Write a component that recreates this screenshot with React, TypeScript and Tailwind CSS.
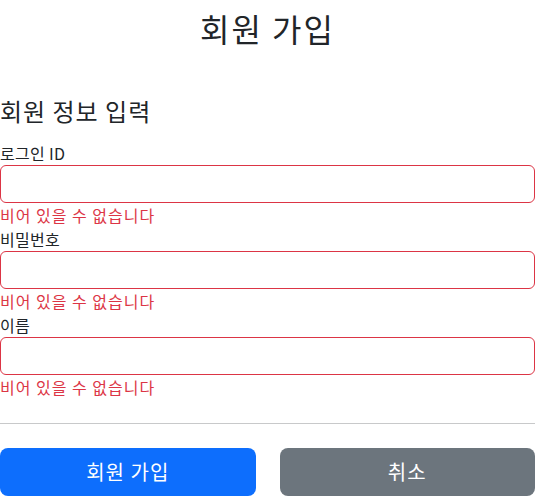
import React from "react";

const font = { fontFamily: '"Noto Sans CJK KR", "Noto Sans", sans-serif' };

function Field({ label }: { label: string }) {
  return (
    <div className="flex flex-col">
      <label className="text-[16px] leading-[24px] tracking-[0.3px] text-[#212529]">{label}</label>
      <input
        type="text"
        className="h-[38px] w-full rounded-[6px] border border-[#dc3545] bg-white px-3 outline-none"
      />
      <div className="text-[16px] leading-[24px] tracking-[1px] text-[#dc3545]">비어 있을 수 없습니다</div>
    </div>
  );
}

export default function App() {
  return (
    <div className="w-[535px] bg-white text-[#212529]" style={font}>
      <div className="pt-[9px] text-center text-[32px] leading-[38px] tracking-[2px] font-normal">회원 가입</div>
      <div className="mt-[49px] text-[24px] leading-[29px] tracking-[1px]">회원 정보 입력</div>
      <div className="mt-[16px] flex flex-col">
        <Field label="로그인 ID" />
        <Field label="비밀번호" />
        <Field label="이름" />
      </div>
      <hr className="my-[24px] border-0 border-t border-[#c8c9ca]" />
      <div className="grid grid-cols-2 gap-[24px]">
        <button className="h-[48px] rounded-[8px] bg-[#0d6efd] text-[20px] tracking-[1px] text-white">회원 가입</button>
        <button className="h-[48px] rounded-[8px] bg-[#6c757d] text-[20px] tracking-[1px] text-white">취소</button>
      </div>
    </div>
  );
}
